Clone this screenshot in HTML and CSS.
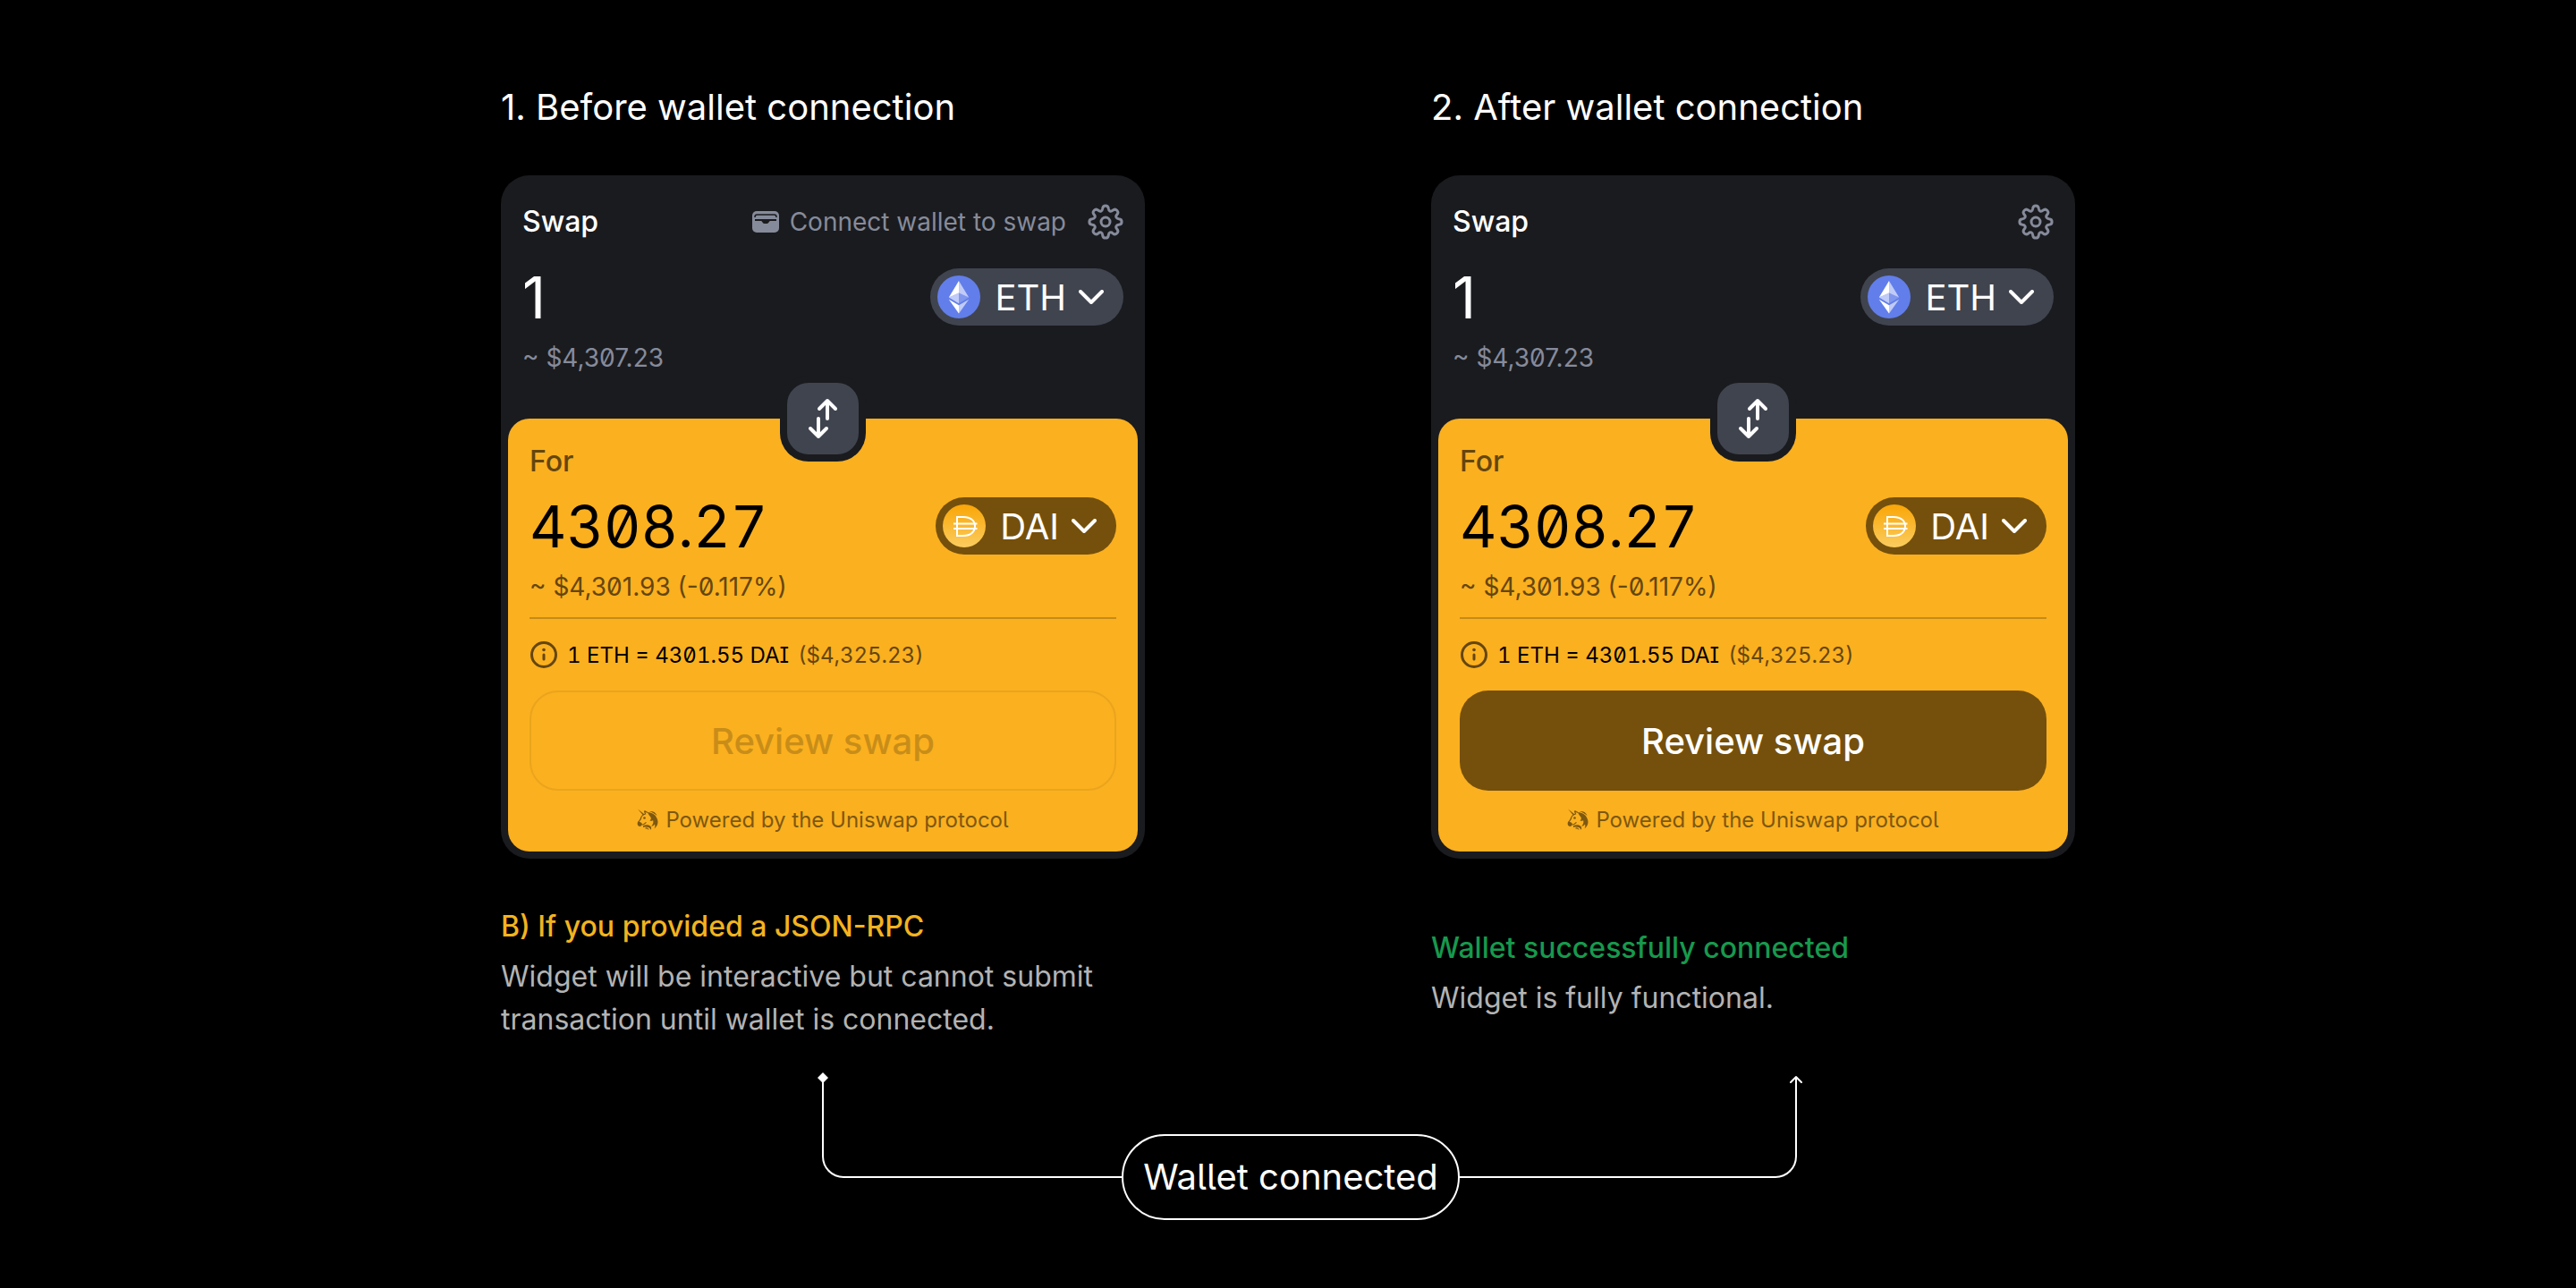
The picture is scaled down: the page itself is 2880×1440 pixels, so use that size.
FILE: index.html
```html
<!DOCTYPE html>
<html lang="en">
<head>
<meta charset="utf-8">
<meta name="viewport" content="width=device-width, initial-scale=1">
<title>Swap widget wallet connection</title>
<link rel="stylesheet" href="styles.css">
</head>
<body>
<svg class="sprite" aria-hidden="true">
  <symbol id="gear" viewBox="0 0 40 40">
    <g fill="none" stroke="currentColor" stroke-width="3" stroke-linejoin="round">
      <circle cx="20" cy="20" r="5"/>
      <path d="M16.700 5.200C17 0.800 23 0.800 23.300 5.200C23.600 8.200 26 9.200 28.100 7.200C31.400 4.300 35.700 8.600 32.800 11.900C30.800 14 31.800 16.400 34.800 16.700C39.200 17 39.200 23 34.800 23.300C31.800 23.600 30.800 26 32.800 28.100C35.700 31.400 31.400 35.700 28.100 32.800C26 30.800 23.600 31.800 23.300 34.800C23 39.200 17 39.200 16.700 34.800C16.400 31.800 14 30.800 11.900 32.800C8.600 35.700 4.300 31.400 7.200 28.100C9.200 26 8.200 23.600 5.200 23.300C0.800 23 0.800 17 5.200 16.700C8.200 16.400 9.200 14 7.200 11.900C4.300 8.600 8.600 4.300 11.900 7.200C14 9.200 16.400 8.200 16.700 5.200Z"/>
    </g>
  </symbol>
  <symbol id="wallet" viewBox="0 0 30 24">
    <rect width="30" height="24" rx="5" fill="currentColor"/>
    <path fill="none" stroke="#1a1b1f" stroke-width="1.500" d="M3 7V6.500C3 5 4 4 5.500 4H24.500C26 4 27 5 27 6.500V7"/>
    <path fill="#1a1b1f" d="M3 9H27V11H20C18.800 11 18.500 14 16.500 14H13.500C11.500 14 11.200 11 10 11H3Z"/>
  </symbol>
  <symbol id="eth" viewBox="0 0 48 48">
    <circle cx="24" cy="24" r="24" fill="#627eea"/>
    <g fill="#fff">
      <path d="M24 6L12.800 24.600L24 19.500Z"/>
      <path fill-opacity=".6" d="M24 6L35.200 24.600L24 19.500Z"/>
      <path fill-opacity=".6" d="M24 19.500L12.800 24.600L24 31.200Z"/>
      <path fill-opacity=".2" d="M24 19.500L35.200 24.600L24 31.200Z"/>
      <path d="M12.800 26.700L24 33.300V42.400Z"/>
      <path fill-opacity=".6" d="M35.200 26.700L24 33.300V42.400Z"/>
    </g>
  </symbol>
  <symbol id="dai" viewBox="0 0 48 48">
    <linearGradient id="daiFill" x1="0" y1="0" x2="0" y2="1"><stop offset="0" stop-color="#f9a606"/><stop offset="1" stop-color="#fbcc5f"/></linearGradient>
    <circle cx="24" cy="24" r="24" fill="url(#daiFill)"/>
    <path fill="none" stroke="#fff" stroke-width="2" d="M16 14H23C31 14 36 18 36 24.300C36 30.500 31 35 23 35H16ZM12 21.500H38.500M12 27H38.500"/>
  </symbol>
  <symbol id="chevron" viewBox="0 0 28 16">
    <path fill="none" stroke="currentColor" stroke-width="4" stroke-linecap="round" stroke-linejoin="round" d="M2 2L14 14L26 2"/>
  </symbol>
  <symbol id="switch" viewBox="0 0 48 48">
    <path fill="none" stroke="currentColor" stroke-width="4" stroke-linecap="round" stroke-linejoin="round" d="M29 24V4M20 13L29 4L38 13M19 24V44M10 35L19 44L28 35"/>
  </symbol>
  <symbol id="info" viewBox="0 0 32 32">
    <circle cx="16" cy="16" r="13.500" fill="none" stroke="currentColor" stroke-width="3"/>
    <path stroke="currentColor" stroke-width="3" stroke-linecap="round" d="M16 16V21"/>
    <circle cx="16" cy="10.500" r="1.800" fill="currentColor"/>
  </symbol>
  <symbol id="unicorn" viewBox="0 0 24 24">
    <g fill="currentColor">
      <path d="M1 0.500L8.500 6.500L7 7.500Z"/>
      <path d="M12 4C16.500 4.500 21 6.500 22.500 11C24.500 15 23.500 19.500 19.500 22.500C20.500 20 20.500 18.800 20 17.500C19 19 17.500 19.500 16 20C18 17.500 19 15.500 18 13C17 14 16 14 14.500 13.500C16.200 12 16.200 10.500 15 9C13.500 7.200 12.500 6 12 4Z"/>
      <path d="M14 3C18 2.500 21.500 4.500 22.500 8C20 5.800 17.500 4.500 14 3Z"/>
      <path d="M1 15C3 14.500 5.500 15.500 6 17.500C5.500 19.500 3.500 20.500 2 19.500C0.600 18.600 0.300 16.800 1 15Z"/>
      <path d="M7 19.200C10 17.500 14 18 15.500 20C16.500 21.500 16.200 22.800 15.500 23.800C14.500 21 11.500 20 7 21Z"/>
      <path d="M9.500 21.500C11.500 21 13 22 13.500 24C12 22.800 11 22.500 9.500 22.500Z"/>
      <circle cx="8.500" cy="10.500" r="1.300"/>
    </g>
    <path fill="none" stroke="currentColor" stroke-width="1.200" d="M8.500 2.500L9.500 6C6.500 7 4.800 9 4.500 11C4 13 2.200 13.800 1.500 15.500M8.500 2.500L12 4.500M6 18C8 18.200 8.500 16.500 10.500 15.500"/>
  </symbol>
</svg>

<main class="page">
  <div class="columns">
    <section class="column">
      <h1 class="title">1. Before wallet connection</h1>
      <article class="widget">
        <div class="from">
          <header class="bar">
            <h2 class="label">Swap</h2>
            <div class="actions">
              <button class="connect" type="button"><svg class="icon-wallet" aria-hidden="true"><use href="#wallet"/></svg>Connect wallet to swap</button>
              <button class="settings" type="button" aria-label="Settings"><svg class="icon-gear" aria-hidden="true"><use href="#gear"/></svg></button>
            </div>
          </header>
          <div class="row">
            <input class="amount" type="text" value="1" aria-label="Amount to swap">
            <button class="token" type="button"><svg class="coin" aria-hidden="true"><use href="#eth"/></svg>ETH<svg class="chevron" aria-hidden="true"><use href="#chevron"/></svg></button>
          </div>
          <p class="fiat">~ $4,307.23</p>
        </div>
        <div class="to">
          <button class="switch" type="button" aria-label="Switch tokens"><svg class="icon-switch" aria-hidden="true"><use href="#switch"/></svg></button>
          <h2 class="label">For</h2>
          <div class="row">
            <input class="amount amount-quoted" type="text" value="4308.27" aria-label="Amount to receive">
            <button class="token" type="button"><svg class="coin" aria-hidden="true"><use href="#dai"/></svg>DAI<svg class="chevron" aria-hidden="true"><use href="#chevron"/></svg></button>
          </div>
          <p class="fiat">~ $4,301.93 (-0.117%)</p>
          <p class="rate"><svg class="icon-info" aria-hidden="true"><use href="#info"/></svg><span class="rate-main">1 ETH = 4301.55 DAI</span><span>($4,325.23)</span></p>
          <button class="review" type="button" disabled>Review swap</button>
          <p class="powered"><svg class="icon-unicorn" aria-hidden="true"><use href="#unicorn"/></svg>Powered by the Uniswap protocol</p>
        </div>
      </article>
      <div class="note">
        <h3 class="note-title note-pending">B) If you provided a JSON-RPC</h3>
        <p class="note-text">Widget will be interactive but cannot submit transaction until wallet is connected.</p>
      </div>
    </section>

    <section class="column">
      <h1 class="title">2. After wallet connection</h1>
      <article class="widget">
        <div class="from">
          <header class="bar">
            <h2 class="label">Swap</h2>
            <div class="actions">
              <button class="settings" type="button" aria-label="Settings"><svg class="icon-gear" aria-hidden="true"><use href="#gear"/></svg></button>
            </div>
          </header>
          <div class="row">
            <input class="amount" type="text" value="1" aria-label="Amount to swap">
            <button class="token" type="button"><svg class="coin" aria-hidden="true"><use href="#eth"/></svg>ETH<svg class="chevron" aria-hidden="true"><use href="#chevron"/></svg></button>
          </div>
          <p class="fiat">~ $4,307.23</p>
        </div>
        <div class="to">
          <button class="switch" type="button" aria-label="Switch tokens"><svg class="icon-switch" aria-hidden="true"><use href="#switch"/></svg></button>
          <h2 class="label">For</h2>
          <div class="row">
            <input class="amount amount-quoted" type="text" value="4308.27" aria-label="Amount to receive">
            <button class="token" type="button"><svg class="coin" aria-hidden="true"><use href="#dai"/></svg>DAI<svg class="chevron" aria-hidden="true"><use href="#chevron"/></svg></button>
          </div>
          <p class="fiat">~ $4,301.93 (-0.117%)</p>
          <p class="rate"><svg class="icon-info" aria-hidden="true"><use href="#info"/></svg><span class="rate-main">1 ETH = 4301.55 DAI</span><span>($4,325.23)</span></p>
          <button class="review" type="button">Review swap</button>
          <p class="powered"><svg class="icon-unicorn" aria-hidden="true"><use href="#unicorn"/></svg>Powered by the Uniswap protocol</p>
        </div>
      </article>
      <div class="note">
        <h3 class="note-title note-done">Wallet successfully connected</h3>
        <p class="note-text">Widget is fully functional.</p>
      </div>
    </section>
  </div>

  <div class="flow">
    <div class="line line-start"><svg class="tip" viewBox="0 0 14 14" aria-hidden="true"><path fill="#fff" d="M7 1L13 7L7 13L1 7Z"/></svg></div>
    <p class="step">Wallet connected</p>
    <div class="line line-end"><svg class="tip" viewBox="0 0 14 14" aria-hidden="true"><path fill="none" stroke="#fff" stroke-width="2" stroke-linecap="round" stroke-linejoin="round" d="M1 12L7 6L13 12"/></svg></div>
  </div>
</main>
</body>
</html>
```
FILE: styles.css
```css
* { box-sizing: border-box; }

body {
  margin: 0;
  background: #000;
  color: #fff;
  font-family: Inter, "Liberation Sans", sans-serif;
}

h1, h2, h3, p { margin: 0; }

button, input {
  font: inherit;
  color: inherit;
  border: 0;
  padding: 0;
  background: none;
}

svg { display: block; flex: none; }
.sprite { position: absolute; width: 0; height: 0; }

.page { padding: 96px 48px 76px; }

.columns {
  display: flex;
  justify-content: center;
  gap: 320px;
}

.column {
  display: flex;
  flex-direction: column;
  flex: 0 1 720px;
  min-width: 0;
}

.title {
  margin-bottom: 52px;
  font-size: 40px;
  line-height: 48px;
  font-weight: 400;
}

.widget {
  padding: 8px;
  border-radius: 32px;
  background: #1a1b1f;
}

.from {
  height: 264px;
  padding: 16px;
  color: #fff;
}

.bar, .actions, .connect, .row, .token, .rate, .powered {
  display: flex;
  align-items: center;
}

.bar, .row { justify-content: space-between; }
.bar { height: 56px; }
.actions { gap: 24px; color: #868b9b; }

.connect {
  gap: 12px;
  font-size: 28px;
  line-height: 40px;
}

.label {
  font-size: 32px;
  line-height: 40px;
  font-weight: 500;
}

.icon-wallet { width: 30px; height: 24px; }
.icon-gear { width: 40px; height: 40px; }

.row { height: 64px; margin-top: 24px; }

.amount {
  flex: 1;
  width: 100%;
  min-width: 0;
  height: 64px;
  font-size: 64px;
}

.amount-quoted { font-feature-settings: "tnum", "zero"; }

.token {
  flex: none;
  height: 64px;
  padding: 0 22px 0 8px;
  border-radius: 32px;
  background: #40444f;
  color: #fff;
  font-size: 40px;
}

.coin { width: 48px; height: 48px; margin-right: 16px; }
.chevron { width: 28px; height: 16px; margin-left: 14px; }

.fiat {
  margin-top: 16px;
  font-size: 28px;
  line-height: 40px;
  font-feature-settings: "zero";
  color: #868b9b;
}

.to {
  position: relative;
  padding: 28px 24px 4px;
  border-radius: 24px;
  background: #fbb01f;
  color: #000;
}

.to .row { margin-top: 20px; }

.switch {
  position: absolute;
  top: -48px;
  left: 50%;
  width: 96px;
  height: 96px;
  margin-left: -48px;
  border: 8px solid #1a1b1f;
  border-radius: 32px;
  background: #40444f;
  color: #fff;
}

.icon-switch { width: 48px; height: 48px; margin: auto; }

.to .label, .to .fiat, .rate { color: #644610; }
.to .token, .review { background: #75500c; }

.to .fiat {
  padding-bottom: 14px;
  border-bottom: 2px solid #c68b18;
}

.rate {
  gap: 10px;
  height: 80px;
  font-size: 24px;
  font-feature-settings: "tnum", "zero", "ss02";
}

.rate-main { color: #000; }
.icon-info { width: 32px; height: 32px; }

.review {
  display: block;
  width: 100%;
  height: 112px;
  border-radius: 32px;
  color: #fff;
  font-size: 40px;
  font-weight: 500;
}

.review:disabled {
  border: 2px solid #eaa41d;
  background: none;
  color: #c88d19;
}

.powered {
  justify-content: center;
  gap: 8px;
  height: 64px;
  font-size: 24px;
  font-feature-settings: "cv05";
  color: #7d5810;
}

.icon-unicorn { width: 24px; height: 24px; }

.note {
  display: flex;
  flex-direction: column;
  justify-content: center;
  flex: 1;
  gap: 8px;
  margin-top: 52px;
  font-size: 32px;
  line-height: 48px;
}

.note-title { font-size: 32px; font-weight: 500; }
.note-pending { color: #f3b31f; }
.note-done { color: #17994d; }
.note-text { color: #b3b3b3; }

.flow {
  display: flex;
  justify-content: center;
  align-items: flex-start;
  margin-top: 40px;
  padding-left: 48px;
}

.line {
  position: relative;
  height: 113px;
  border-bottom: 2px solid #fff;
}

.line-start {
  flex: 0 1 335px;
  border-left: 2px solid #fff;
  border-bottom-left-radius: 24px;
}

.line-end {
  flex: 0 1 377px;
  border-right: 2px solid #fff;
  border-bottom-right-radius: 24px;
}

.tip { position: absolute; top: -6px; width: 14px; height: 14px; }
.line-start .tip { left: -8px; }
.line-end .tip { right: -8px; }

.step {
  flex: 0 0 378px;
  margin-top: 64px;
  border: 2px solid #fff;
  border-radius: 48px;
  font-size: 40px;
  line-height: 92px;
  font-feature-settings: "cv05";
  text-align: center;
  white-space: nowrap;
}
```
